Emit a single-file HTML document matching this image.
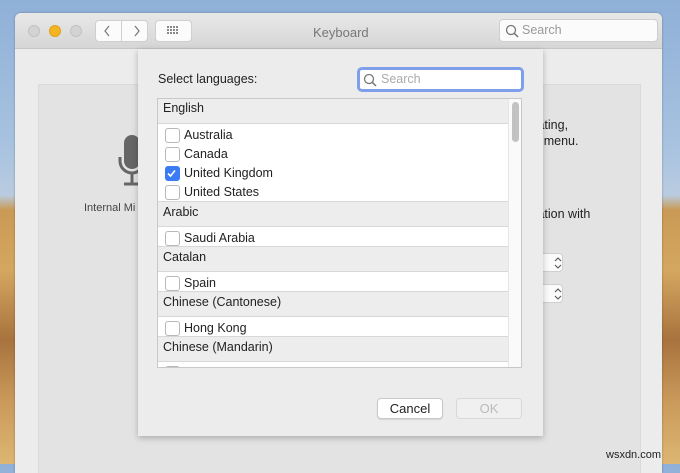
<!DOCTYPE html>
<html><head><style>
*{margin:0;padding:0;box-sizing:border-box}
body{width:680px;height:464px;overflow:hidden;position:relative;font-family:"Liberation Sans",sans-serif;font-size:12px;color:#222;
background:linear-gradient(180deg,#8fb0d8 0px,#a9c3e0 150px,#b9cbe0 195px,#c99a55 210px,#d4a760 270px,#a8733e 340px,#c9995a 400px,#ddb673 464px)}
.a{position:absolute}
.win{left:15px;top:13px;width:647px;height:460px;background:#ececec;border-radius:6px 6px 0 0;overflow:hidden;box-shadow:0 0 2px rgba(0,0,0,.3)}
.tb{left:0;top:0;width:647px;height:36px;background:linear-gradient(#e8e8e8,#d6d6d6);border-bottom:1px solid #c6c6c6}
.dot{width:12px;height:12px;border-radius:50%;top:12px;background:#d3d3d3;border:1px solid #c2c2c2}
.btn{background:#fbfbfb;border:1px solid #cfcfcf;border-radius:4px}
.panel{left:23px;top:71px;width:603px;height:400px;background:#e3e3e3;border:1px solid #dadada}
.sheet{left:123px;top:36px;width:405px;height:387px;background:#ececec;box-shadow:0 2px 6px rgba(0,0,0,.25)}
.list{left:157px;top:98px;width:365px;height:270px;background:#fff;border:1px solid #c8c8c8;overflow:hidden}
.h{position:absolute;left:0;width:350px;height:26px;background:#ededed;border-top:1px solid #d8d8d8;border-bottom:1px solid #d8d8d8;padding:3px 0 0 5px;font-size:12.5px}
.i{position:absolute;left:7px;font-size:12.5px;padding-left:19px;line-height:14px}
.i:before{content:"";position:absolute;left:0;top:0;width:13px;height:13px;border:1px solid #b8b8b8;border-radius:3px;background:#fff}
.i.c:before{background:#3b7cf4;border-color:#3b7cf4}
.pb{font-size:13px;text-align:center;border-radius:4px;height:21px;line-height:19px}
</style></head><body>
<div class="a win">
 <div class="a tb">
  <div class="a dot" style="left:13px"></div>
  <div class="a dot" style="left:34px;background:#f5b421;border-color:#e0a21a"></div>
  <div class="a dot" style="left:55px"></div>
  <div class="a btn" style="left:80px;top:7px;width:53px;height:22px"></div>
  <div class="a" style="left:106px;top:8px;width:1px;height:20px;background:#d0d0d0"></div>
  <svg class="a" style="left:88px;top:11px" width="40" height="14"><path d="M6 2L2 7l4 5" fill="none" stroke="#777" stroke-width="1.2"/><path d="M32 2l4 5-4 5" fill="none" stroke="#777" stroke-width="1.2"/></svg>
  <div class="a btn" style="left:140px;top:7px;width:37px;height:22px"></div>
  <svg class="a" style="left:152px;top:13px" width="14" height="10"><g fill="#888"><rect x="0" y="0" width="2" height="2"/><rect x="3" y="0" width="2" height="2"/><rect x="6" y="0" width="2" height="2"/><rect x="9" y="0" width="2" height="2"/><rect x="0" y="3" width="2" height="2"/><rect x="3" y="3" width="2" height="2"/><rect x="6" y="3" width="2" height="2"/><rect x="9" y="3" width="2" height="2"/><rect x="0" y="6" width="2" height="2"/><rect x="3" y="6" width="2" height="2"/><rect x="6" y="6" width="2" height="2"/><rect x="9" y="6" width="2" height="2"/></g></svg>
  <div class="a" style="left:298px;top:12px;color:#777;font-size:13px">Keyboard</div>
  <div class="a btn" style="left:484px;top:6px;width:159px;height:23px;color:#999;font-size:12.5px;padding:3px 0 0 22px">Search</div>
  <svg class="a" style="left:490px;top:11px" width="14" height="14"><circle cx="6" cy="6" r="4.5" fill="none" stroke="#777" stroke-width="1.3"/><path d="M9.3 9.3L13 13" stroke="#777" stroke-width="1.5"/></svg>
 </div>
 <div class="a panel"></div>
 <svg class="a" style="left:103px;top:120px" width="30" height="60"><rect x="6" y="2" width="16" height="34" rx="8" fill="#666"/><path d="M2 24v4a12 12 0 0 0 24 0v-4" fill="none" stroke="#666" stroke-width="3"/><path d="M14 40v10M6 51h16" stroke="#666" stroke-width="3"/></svg>
 <div class="a" style="left:69px;top:189px;font-size:11px;color:#444">Internal Mi</div>
 <div class="a" style="left:519px;top:104px;font-size:12.5px;line-height:16px">tating,<br>it menu.</div>
 <div class="a" style="left:519px;top:194px;font-size:12.5px">tation with</div>
 <div class="a btn" style="left:520px;top:240px;width:28px;height:19px"></div>
 <div class="a btn" style="left:520px;top:271px;width:28px;height:19px"></div>
 <svg class="a" style="left:539px;top:243px" width="8" height="44"><path d="M1 5l3-3 3 3M1 9l3 3 3-3M1 36l3-3 3 3M1 40l3 3 3-3" fill="none" stroke="#555" stroke-width="1.1"/></svg>
 <div class="a sheet"></div>
</div>
<div class="a" style="left:158px;top:72px;font-size:12.5px">Select languages:</div>
<div class="a" style="left:357px;top:67px;width:167px;height:25px;border:3px solid #7f9fea;border-radius:5px;background:#fff;color:#aaa;font-size:12.5px;padding:2px 0 0 21px">Search</div>
<svg class="a" style="left:363px;top:73px" width="14" height="14"><circle cx="6" cy="6" r="4.5" fill="none" stroke="#777" stroke-width="1.3"/><path d="M9.3 9.3L13 13" stroke="#777" stroke-width="1.5"/></svg>
<div class="a list">
 <div class="h" style="top:-1px;border-top:none">English</div>
 <div class="i" style="top:29px">Australia</div>
 <div class="i" style="top:48px">Canada</div>
 <div class="i c" style="top:67px">United Kingdom</div>
 <div class="i" style="top:86px">United States</div>
 <div class="h" style="top:102px">Arabic</div>
 <div class="i" style="top:132px">Saudi Arabia</div>
 <div class="h" style="top:147px">Catalan</div>
 <div class="i" style="top:177px">Spain</div>
 <div class="h" style="top:192px">Chinese (Cantonese)</div>
 <div class="i" style="top:222px">Hong Kong</div>
 <div class="h" style="top:237px">Chinese (Mandarin)</div>
 <div class="i" style="top:267px"></div>
 <svg class="a" style="left:9px;top:70px" width="9" height="9"><path d="M1 4.5l2.5 2.5L8 1.5" fill="none" stroke="#fff" stroke-width="1.6"/></svg>
 <div class="a" style="left:350px;top:0;width:14px;height:270px;background:#fafafa;border-left:1px solid #e6e6e6"></div>
 <div class="a" style="left:354px;top:3px;width:7px;height:40px;background:#c2c2c2;border-radius:4px"></div>
</div>
<div class="a pb" style="left:377px;top:398px;width:66px;background:#fff;border:1px solid #c8c8c8;box-shadow:0 1px 1px rgba(0,0,0,.1)">Cancel</div>
<div class="a pb" style="left:456px;top:398px;width:66px;background:#f0f0f0;border:1px solid #d8d8d8;color:#bbb">OK</div>
<div class="a" style="left:606px;top:449px;font-size:11px;color:#222">wsxdn.com</div>
</body></html>
